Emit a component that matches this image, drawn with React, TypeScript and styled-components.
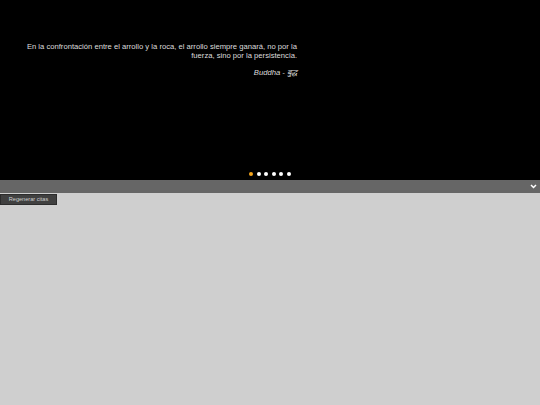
import React from 'react'
import styled, { createGlobalStyle } from 'styled-components'

const GlobalStyle = createGlobalStyle`
  html, body {
    margin: 0;
    padding: 0;
    background: #cfcfcf;
    font-family: "Liberation Sans", Arial, sans-serif;
  }
`

const Page = styled.div`
  width: 540px;
  height: 405px;
  display: flex;
  flex-direction: column;
  background: #cfcfcf;
`

const Stage = styled.section`
  height: 180px;
  background: #000;
  display: flex;
  flex-direction: column;
  justify-content: space-between;
`

const Quote = styled.blockquote`
  margin: 42px 0 0 26px;
  width: 271px;
  text-align: right;
  color: #dddddd;
  font-size: 7.65px;
  line-height: 9px;
`

const Author = styled.p`
  margin: 8px 0 0;
  font-style: italic;
  font-size: 7.65px;
  color: #dddddd;
`

const Dots = styled.div`
  display: flex;
  gap: 3.5px;
  margin: 0 0 4px 249px;
`

const Dot = styled.span<{ $active?: boolean }>`
  width: 4px;
  height: 4px;
  border-radius: 50%;
  background: ${p => (p.$active ? '#f5a51c' : '#ffffff')};
`

const Bar = styled.div`
  height: 13px;
  background: #666666;
  display: flex;
  justify-content: flex-end;
  align-items: center;
  padding-right: 3px;
`

const Toolbar = styled.div`
  display: flex;
  padding-top: 1px;
`

const Button = styled.button`
  height: 11px;
  width: 57px;
  padding: 0;
  border: 1px solid #2c2c2c;
  background: #404040;
  color: #cfcfcf;
  font-family: "Liberation Sans", Arial, sans-serif;
  font-size: 5.6px;
  line-height: 9px;
`

const quotes = [0, 1, 2, 3, 4, 5]

export default function App() {
  return (
    <Page>
      <GlobalStyle />
      <Stage>
        <Quote>
          En la confrontación entre el arrollo y la roca, el arrollo siempre ganará, no por la fuerza, sino por la persistencia.
          <Author>Buddha - बुद्ध</Author>
        </Quote>
        <Dots>
          {quotes.map(i => (
            <Dot key={i} $active={i === 0} />
          ))}
        </Dots>
      </Stage>
      <Bar>
        <svg width="7" height="5" viewBox="0 0 7 5">
          <path d="M1 1 L3.5 3.5 L6 1" stroke="#fff" strokeWidth="1.5" fill="none" />
        </svg>
      </Bar>
      <Toolbar>
        <Button>Regenerar citas</Button>
      </Toolbar>
    </Page>
  )
}
